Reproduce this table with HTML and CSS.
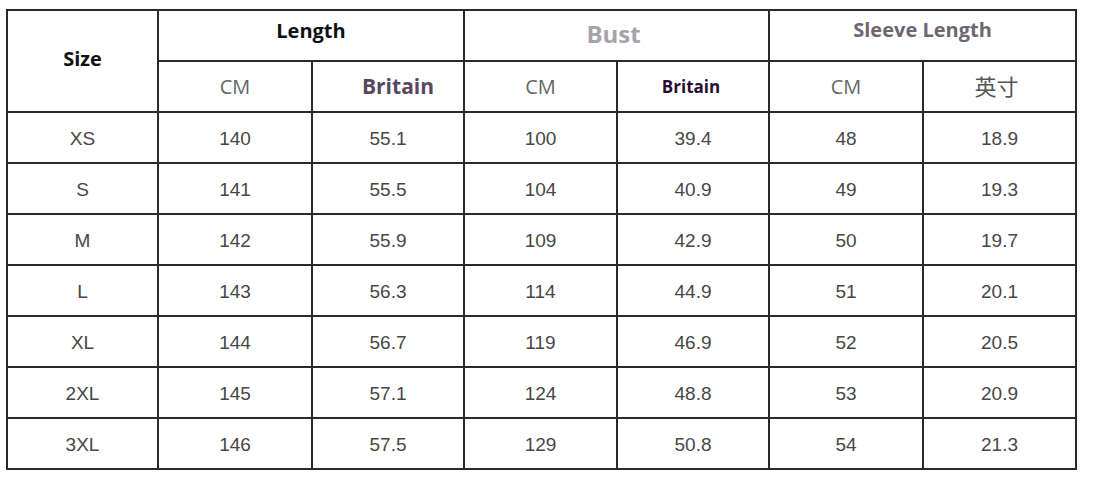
FILE: index.html
```html
<!DOCTYPE html>
<html>
<head>
<meta charset="utf-8">
<link rel="stylesheet" href="styles.css">
</head>
<body>
<table class="size-table">
  <colgroup>
    <col class="c1"><col class="c2"><col class="c3"><col class="c4"><col class="c5"><col class="c6"><col class="c7">
  </colgroup>
  <thead>
    <tr class="head-row">
      <th rowspan="2" class="h-size">Size</th>
      <th colspan="2" class="h-length">Length</th>
      <th colspan="2" class="h-bust">Bust</th>
      <th colspan="2" class="h-sleeve">Sleeve Length</th>
    </tr>
    <tr class="head-row">
      <th class="h-cm">CM</th>
      <th class="h-brit1">Britain</th>
      <th class="h-cm">CM</th>
      <th class="h-brit2">Britain</th>
      <th class="h-cm">CM</th>
      <th class="h-inch">英寸</th>
    </tr>
  </thead>
  <tbody>
    <tr><td>XS</td><td>140</td><td>55.1</td><td>100</td><td>39.4</td><td>48</td><td>18.9</td></tr>
    <tr><td>S</td><td>141</td><td>55.5</td><td>104</td><td>40.9</td><td>49</td><td>19.3</td></tr>
    <tr><td>M</td><td>142</td><td>55.9</td><td>109</td><td>42.9</td><td>50</td><td>19.7</td></tr>
    <tr><td>L</td><td>143</td><td>56.3</td><td>114</td><td>44.9</td><td>51</td><td>20.1</td></tr>
    <tr><td>XL</td><td>144</td><td>56.7</td><td>119</td><td>46.9</td><td>52</td><td>20.5</td></tr>
    <tr><td>2XL</td><td>145</td><td>57.1</td><td>124</td><td>48.8</td><td>53</td><td>20.9</td></tr>
    <tr><td>3XL</td><td>146</td><td>57.5</td><td>129</td><td>50.8</td><td>54</td><td>21.3</td></tr>
  </tbody>
</table>
</body>
</html>
```
FILE: styles.css
```css
html, body {
  margin: 0;
  padding: 0;
  background: #ffffff;
}
body {
  padding: 9px 0 0 6px;
}
.size-table {
  border-collapse: collapse;
  table-layout: fixed;
  width: 1069px;
}
.c1 { width: 151px; }
.c2 { width: 154px; }
.c3 { width: 152px; }
.c4 { width: 153px; }
.c5 { width: 152px; }
.c6 { width: 154px; }
.c7 { width: 153px; }
.size-table tr {
  height: 51px;
}
.size-table th,
.size-table td {
  border: 2px solid #2a2a2a;
  padding: 0;
  text-align: center;
  vertical-align: middle;
}
.size-table td {
  font-family: "Liberation Sans", Arial, sans-serif;
  font-size: 19px;
  color: #474747;
  padding-top: 2px;
}
.size-table th {
  font-family: "Open Sans", sans-serif;
  font-weight: 700;
}
.size-table .h-size {
  font-size: 20px;
  color: #111111;
  padding-bottom: 6px;
}
.size-table .h-length {
  font-size: 20px;
  color: #111111;
  padding-bottom: 10px;
}
.size-table .h-bust {
  font-size: 24px;
  color: #a8a2aa;
  padding-bottom: 4px;
  padding-right: 6px;
}
.size-table .h-sleeve {
  font-size: 20px;
  color: #6e6570;
  padding-bottom: 12px;
}
.size-table .h-cm {
  font-weight: 400;
  font-size: 20px;
  color: #666666;
}
.size-table .h-brit1 {
  font-size: 21px;
  color: #594760;
  padding-left: 20px;
  padding-bottom: 2px;
}
.size-table .h-brit2 {
  font-size: 17px;
  color: #2a0c35;
  padding-right: 4px;
}
.size-table .h-inch {
  font-family: "Noto Sans CJK SC", sans-serif;
  font-weight: 400;
  font-size: 22px;
  color: #555555;
  padding-right: 6px;
  padding-bottom: 4px;
}
```
